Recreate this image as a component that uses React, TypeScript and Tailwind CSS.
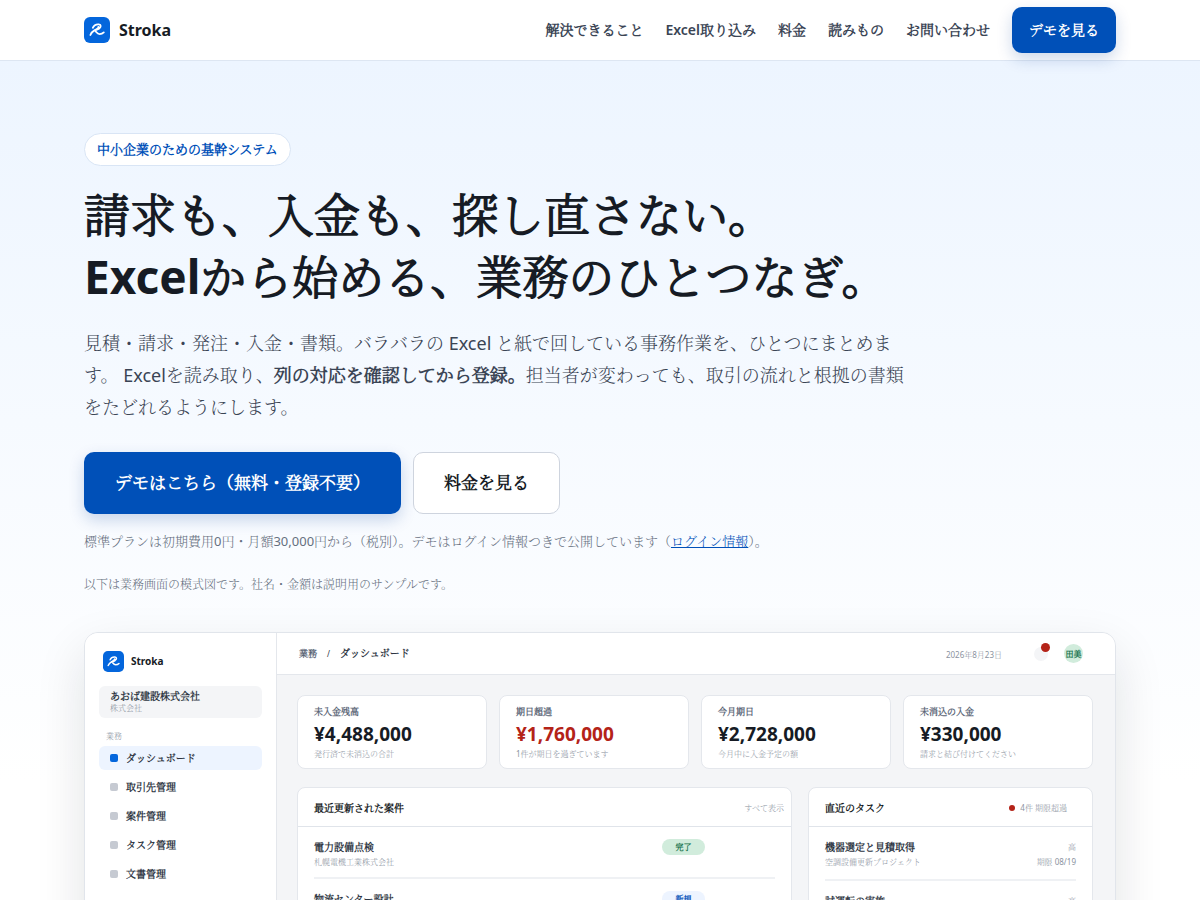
/**
 * Stroka - Landing Page
 */
import type { ReactNode } from 'react'

const navLinks = ['解決できること', 'Excel取り込み', '料金', '読みもの', 'お問い合わせ']

const menuItems = ['ダッシュボード', '取引先管理', '案件管理', 'タスク管理', '文書管理']

const stats = [
  { label: '未入金残高', value: '¥4,488,000', hint: '発行済で未消込の合計', alert: false },
  { label: '期日超過', value: '¥1,760,000', hint: '1件が期日を過ぎています', alert: true },
  { label: '今月期日', value: '¥2,728,000', hint: '今月中に入金予定の額', alert: false },
  { label: '未消込の入金', value: '¥330,000', hint: '請求と結び付けてください', alert: false },
]

const projects = [
  { name: '電力設備点検', client: '札幌電機工業株式会社', status: '完了', done: true },
  { name: '物流センター設計', client: '北都物流株式会社', status: '新規', done: false },
]

const tasks = [
  { name: '機器選定と見積取得', project: '空調設備更新プロジェクト', priority: '高', due: '期限 08/19' },
  { name: '試運転の実施', project: '空調設備更新プロジェクト', priority: '高', due: '期限 08/21' },
]

function Logo({ className }: { className: string }) {
  return (
    <svg viewBox="0 0 26 26" className={className} aria-hidden="true">
      <rect width="26" height="26" rx="6" fill="#0466dc" />
      <path
        d="M6.4 18C7.2 16 8.6 14.4 10.4 13.4C13 12 14.6 10.8 14.4 9.8M8.8 10.8C9.8 8.6 12.4 7.2 14.8 7.4C17.4 7.7 17.2 10.2 15 11.8C13.4 12.8 11.8 13.2 10.4 13.4C12.2 13.9 12.6 17 15.6 17.1C17.4 17.1 18.8 16.4 19.8 15.4"
        fill="none"
        stroke="#fff"
        strokeWidth="1.8"
        strokeLinecap="round"
        strokeLinejoin="round"
      />
    </svg>
  )
}

function Panel({ title, aside, children }: { title: string; aside: ReactNode; children: ReactNode }) {
  return (
    <section className="rounded-lg border border-[#e4e7ec] bg-white">
      <div className="flex h-[39px] items-center justify-between border-b border-[#e0e4ea] pt-0.5 pl-4">
        <h2 className="text-[10px] font-bold text-[#161b24]">{title}</h2>
        {aside}
      </div>
      <ul className="px-4">{children}</ul>
    </section>
  )
}

function Dashboard() {
  return (
    <div className="flex overflow-hidden rounded-[14px] border border-[#e1e5eb] bg-[#f4f5f7] shadow-[0_20px_50px_rgba(20,25,35,0.12)]">
      <aside className="w-48 shrink-0 border-r border-[#e4e7ec] bg-white px-3.5 pt-[18px] pb-10">
        <div className="flex items-center gap-[7px] pl-1">
          <Logo className="size-[21px]" />
          <span className="text-[10px] leading-[21px] font-bold text-[#161b24]">Stroka</span>
        </div>
        <div className="mt-3.5 rounded-md bg-[#f4f5f7] px-[11px] py-1">
          <p className="text-[10px] leading-3 font-bold text-[#2d3542]">あおば建設株式会社</p>
          <p className="text-[8px] leading-3 text-[#8b93a0]">株式会社</p>
        </div>
        <p className="mt-3 pl-[7px] text-[8px] leading-3 text-[#8b93a0]">業務</p>
        <nav className="mt-1 flex flex-col gap-[5px]">
          {menuItems.map((item, i) => (
            <a
              key={item}
              href="#"
              className={
                i === 0
                  ? 'flex h-6 items-center gap-2 rounded-md bg-[#edf4ff] px-[11px] text-[10px] font-bold text-[#2d3542]'
                  : 'flex h-6 items-center gap-2 rounded-md px-[11px] text-[10px] font-bold text-[#2d3542]'
              }
            >
              <span className={i === 0 ? 'size-2 rounded-xs bg-[#0466dc]' : 'size-2 rounded-xs bg-[#c6cad2]'} />
              {item}
            </a>
          ))}
        </nav>
      </aside>

      <div className="min-w-0 flex-1">
        <div className="flex h-[42px] items-center border-b border-[#e4e7ec] bg-white pr-8 pl-[22px]">
          <span className="text-[9px] font-bold text-[#596475]">業務</span>
          <span className="px-2.5 text-[8px] text-[#2d3542]">/</span>
          <span className="text-[10px] font-bold text-[#2d3542]">ダッシュボード</span>
          <span className="mt-0.5 ml-auto text-[8px] text-[#8b93a0]">2026年8月23日</span>
          <span className="relative ml-8 size-3.5 rounded-full bg-[#f4f5f7]">
            <span className="absolute -top-1 -right-0.5 size-[9px] rounded-full bg-[#b42318]" />
          </span>
          <span className="ml-4 flex size-[19px] items-center justify-center rounded-full bg-[#d1ecdc] text-[8px] font-bold whitespace-nowrap text-[#14704a]">
            田美
          </span>
        </div>

        <div className="px-5 pt-5 pr-[22px] pb-10">
          <div className="grid grid-cols-4 gap-3">
            {stats.map((s) => (
              <div key={s.label} className="rounded-lg border border-[#e4e7ec] bg-white px-4 pt-2.5 pb-2">
                <p className="text-[9px] leading-3 font-bold text-[#596475]">{s.label}</p>
                <p
                  className={
                    s.alert
                      ? 'mt-1 text-[19px] leading-6 font-bold text-[#b42318]'
                      : 'mt-1 text-[19px] leading-6 font-bold text-[#161b24]'
                  }
                >
                  {s.value}
                </p>
                <p className="mt-0.5 text-[8px] leading-3 text-[#8b93a0]">{s.hint}</p>
              </div>
            ))}
          </div>

          <div className="mt-[18px] grid grid-cols-[495fr_285fr] gap-4">
            <Panel
              title="最近更新された案件"
              aside={
                <a href="#" className="pr-[7px] text-[8px] text-[#8b93a0]">
                  すべて表示
                </a>
              }
            >
              {projects.map((p) => (
                <li key={p.name} className="flex h-[52px] border-b-2 border-[#eff1f4] pt-3">
                  <div className="flex-1">
                    <p className="text-[10px] leading-4 font-bold text-[#2d3542]">{p.name}</p>
                    <p className="text-[8px] leading-3.5 text-[#8b93a0]">{p.client}</p>
                  </div>
                  <span
                    className={
                      p.done
                        ? 'mr-[70px] flex h-4 w-[43px] items-center justify-center rounded-full bg-[#d1ecdc] text-[8px] font-bold text-[#14704a]'
                        : 'mr-[70px] flex h-4 w-[43px] items-center justify-center rounded-full bg-[#edf4ff] text-[8px] font-bold text-[#0050b8]'
                    }
                  >
                    {p.status}
                  </span>
                </li>
              ))}
            </Panel>
            <Panel
              title="直近のタスク"
              aside={
                <span className="flex items-center gap-[5px] pr-[25px] text-[8px] text-[#8b93a0]">
                  <span className="size-1.5 rounded-full bg-[#b42318]" />
                  4件 期限超過
                </span>
              }
            >
              {tasks.map((t) => (
                <li key={t.name} className="flex h-[54px] justify-between border-b-2 border-[#eff1f4] pt-3">
                  <div>
                    <p className="text-[10px] leading-4 font-bold text-[#2d3542]">{t.name}</p>
                    <p className="text-[8px] leading-3.5 text-[#8b93a0]">{t.project}</p>
                  </div>
                  <div className="text-right text-[8px] text-[#8b93a0]">
                    <p className="leading-4">{t.priority}</p>
                    <p className="leading-3.5">{t.due}</p>
                  </div>
                </li>
              ))}
            </Panel>
          </div>
        </div>
      </div>
    </div>
  )
}

export default function App() {
  return (
    <div
      className="h-screen overflow-hidden bg-white font-['Noto_Sans','Noto_Serif_CJK_JP_Light','Noto_Serif_CJK_JP','Noto_Sans_CJK_JP',sans-serif] text-[#161b24]"
      lang="ja"
    >
      <header className="border-b border-[#dde6f2] bg-white">
        <div className="mx-auto flex h-[60px] max-w-[1080px] items-center justify-between px-6">
          <a href="#" className="flex items-center gap-[9px] text-base font-bold">
            <Logo className="size-[26px]" />
            Stroka
          </a>
          <nav className="flex items-center gap-[22px] text-sm font-semibold text-[#3a4454]">
            {navLinks.map((label) => (
              <a key={label} href="#">
                {label}
              </a>
            ))}
            <a
              href="#"
              className="flex h-[46px] items-center rounded-[10px] bg-[#0050b8] px-[17px] font-bold text-white shadow-[0_6px_16px_rgba(0,60,150,0.2)]"
            >
              デモを見る
            </a>
          </nav>
        </div>
      </header>

      <main className="bg-linear-to-b from-[#edf5ff] to-white to-[720px]">
        <div className="mx-auto max-w-[1080px] px-6 pt-[72px] pb-20">
          <p className="inline-flex h-[33px] items-center rounded-full border border-[#d9e5f5] bg-white px-3 text-[13px] font-bold text-[#0050b8]">
            中小企業のための基幹システム
          </p>
          <h1 className="mt-[17px] text-[46px] leading-[62px] font-bold">
            請求も、入金も、探し直さない。
            <br />
            Excelから始める、業務のひとつなぎ。
          </h1>
          <p className="mt-5 max-w-[820px] text-lg leading-8 text-[#3a4454]">
            見積・請求・発注・入金・書類。バラバラの Excel と紙で回している事務作業を、ひとつにまとめます。
            Excelを読み取り、<strong className="font-bold">列の対応を確認してから登録。</strong>
            担当者が変わっても、取引の流れと根拠の書類をたどれるようにします。
          </p>
          <div className="mt-[29px] flex gap-3 text-[17px] font-bold">
            <a
              href="#"
              className="flex h-[62px] items-center rounded-[10px] bg-[#0050b8] px-[31px] text-white shadow-[0_6px_16px_rgba(0,60,150,0.2)]"
            >
              デモはこちら（無料・登録不要）
            </a>
            <a href="#" className="flex h-[62px] items-center rounded-[10px] border border-[#ced4de] bg-white px-[30px]">
              料金を見る
            </a>
          </div>
          <p className="mt-[15px] text-[13px] leading-6 text-[#667080]">
            標準プランは初期費用0円・月額30,000円から（税別）。デモはログイン情報つきで公開しています（
            <a href="#" className="text-[#0050b8] underline">
              ログイン情報
            </a>
            ）。
          </p>
          <p className="mt-[22px] mb-[37px] text-xs leading-5 text-[#667080]">
            以下は業務画面の模式図です。社名・金額は説明用のサンプルです。
          </p>
          <Dashboard />
        </div>
      </main>
    </div>
  )
}
